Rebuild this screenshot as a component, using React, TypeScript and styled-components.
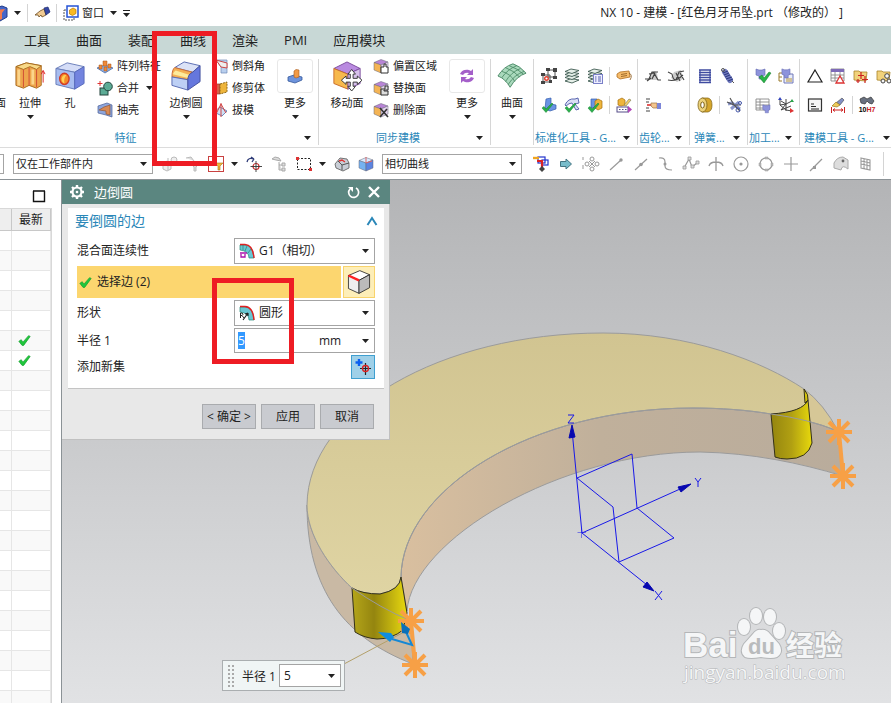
import React, { ReactNode, useEffect, useRef } from "react";
import styled, { createGlobalStyle, css } from "styled-components";

const GlobalStyle = createGlobalStyle`
  * { box-sizing: border-box; }
  body {
    margin: 0;
    background: #fff;
    color: #222;
    font-family: "Open Sans", "Noto Sans CJK SC", sans-serif;
    font-size: 12px;
  }
  button, input, select { font: inherit; color: inherit; margin: 0; }
`;

/* ---------- icons ---------- */

const ink = "#444";
const grey = "#999";
const gold = "#eeb53c";

const cube = (top: string, left: string, right: string) => (
  <>
    <path d="M1 4.500L8 1.500L15 4L8 7Z" fill={top} stroke="#667" strokeWidth=".5" />
    <path d="M1 4.500L8 7V15L1 12Z" fill={left} stroke="#667" strokeWidth=".5" />
    <path d="M8 7L15 4V12L8 15Z" fill={right} stroke="#667" strokeWidth=".5" />
  </>
);

const layers = (
  <g fill="#e6efe9" stroke="#3d5a50" strokeWidth=".9">
    <path d="M1 13L7 10.500L15 12L8 15Z" />
    <path d="M1 9.500L7 7L15 8.500L8 11.500Z" />
    <path d="M1 6.500L7 4L15 5.500L8 8.500Z" />
    <path d="M1 3.500L7 1L15 2.500L8 5.500Z" />
  </g>
);

const tick = <path d="M1 11L3 9.500L5 12L11 6L12 7L5 15.500Z" fill="#29b04a" stroke="#168032" strokeWidth=".5" />;
const purpleClamp = <path d="M1 1L4 2H7L10 1V7L8 8V11H4V8L1 7Z" fill="#8d93dc" stroke="#6268b0" strokeWidth=".6" />;

const glyphs: Record<string, ReactNode> = {
  part: (
    <>
      <path d="M0 4L10 1L15 3V12L8 16L0 14Z" fill="#4566c9" stroke="#233d8a" />
      <path d="M2 5L13 4L10 8V14L7 15V9Z" fill="#f07a4c" />
    </>
  ),
  hand: (
    <>
      <path d="M1 10L6 6L10 4L12 10L8 12L7 10L5 12L4 10Z" fill="#f1cb93" stroke="#6b4b22" strokeWidth=".8" />
      <path d="M10 3L14 2L16 7L12 10Z" fill="#3547a5" stroke="#1e2a6b" strokeWidth=".7" />
    </>
  ),
  windows: (
    <>
      <path d="M1 5H11V15H1Z" fill="none" stroke="#555" strokeDasharray="2 1" />
      <rect x="4" y="1" width="11" height="11" fill="#fff" stroke="#2453d6" strokeWidth="1.500" />
      <path d="M6.500 5L10 3L13 4.500V8.500L9.500 10.500L6.500 9Z" fill="#f9b923" stroke="#b97a00" strokeWidth=".7" />
    </>
  ),
  pattern: (
    <>
      <path d="M0 10L8 7L16 10L8 15Z" fill="#8fb2e6" stroke="#3b5fa0" strokeWidth=".7" />
      <path d="M2 7h3v4H2zM6 3h4v5H6zM11 6h3v4h-3zM7 9h3v4H7z" fill="#f08a3a" stroke="#a1521a" strokeWidth=".5" />
    </>
  ),
  unite: (
    <>
      <rect x="3" y="8" width="8" height="7" fill="#5cab95" stroke="#24453d" />
      <circle cx="11" cy="6.500" r="4.300" fill="#5cab95" stroke="#24453d" />
      <path d="M3 1V6M.5 3.500H5.500" stroke="#d33" />
    </>
  ),
  shell: (
    <>
      <path d="M1 4L10 1L15 3V15L9 13L1 11Z" fill="#8ea6dc" stroke="#4b5f95" strokeWidth=".7" />
      <path d="M7 5L13 3V13L9 12V9L2 8Z" fill="#d98a55" stroke="#8c4d25" strokeWidth=".6" />
    </>
  ),
  chamfer: (
    <>
      <path d="M4 2H15V15H9V9Z" fill="#b9cfee" stroke="#6d86b5" strokeWidth=".7" />
      <path d="M4 2L15 5V10L9 9Z" fill="#eee" stroke="#c44" />
    </>
  ),
  trim: (
    <>
      <path d="M1 4H8V14H1Z" fill="#d65f4a" stroke="#933" strokeWidth=".7" />
      <path d="M8 4L15 2V12L8 14Z" fill={gold} stroke="#8c6517" strokeDasharray="2 1" />
    </>
  ),
  draft: (
    <>
      <path d="M2 10L8 5L15 9L10 14Z" fill="#cfe0f5" stroke="#5870a8" strokeWidth=".8" />
      <path d="M9 1V15M9 2L4 12M9 2L14 11" stroke="#d04545" fill="none" />
    </>
  ),
  more: (
    <>
      <path d="M1 9L7 7L15 9V12L8 15L1 13Z" fill="#6d93dc" stroke="#35589b" strokeWidth=".8" />
      <path d="M7 3L9 1.500L12 2V9L9 10L7 9Z" fill="#f19a46" stroke="#a85a1d" strokeWidth=".6" />
    </>
  ),
  sync: (
    <g fill="#a45fc9">
      <path d="M1 6A7 6 0 0 1 12 3L14 1V7H8L10 5A5 4 0 0 0 4 7Z" />
      <path d="M15 10A7 6 0 0 1 4 13L2 15V9H8L6 11A5 4 0 0 0 12 9Z" />
    </g>
  ),
  offset: (
    <>
      {cube("#b884d6", "#f4b454", "#e4d4ee")}
      <path d="M8 9h3V6h2v3h2v6H8z" fill="#fff" stroke="#333" />
    </>
  ),
  replace: (
    <>
      {cube("#b884d6", "#f4b454", "#e4d4ee")}
      <path d="M8 9h4V6h3v4h-4v1h4v4H8z" fill="#ddd" stroke="#333" />
    </>
  ),
  remove: (
    <>
      {cube("#b884d6", "#f4b454", "#e4d4ee")}
      <path d="M7 6L15 15M14 7L7 15" stroke="#333" strokeWidth="1.600" />
    </>
  ),
  nodes: (
    <>
      <path d="M2 7H9V14H2Z M7 2H14V9H7Z" fill="none" stroke="#555" />
      <path d="M0 5h4v3H0zM0 13h4v3H0zM8 12h3v3H8zM5 0h4v3H5zM12 0h4v4h-4zM12 8h4v3h-4z" fill={ink} />
      <circle cx="5.500" cy="10.500" r="1.800" fill="#fff" stroke="#e1402f" strokeWidth="1.400" />
    </>
  ),
  layers,
  layerList: (
    <>
      {layers}
      <rect x="6.500" y="6.500" width="9" height="9" fill="#eef" stroke="#7a80c8" />
      <path d="M8 9h1.500M11 9h3M8 11h1.500M11 11h3M8 13h1.500M11 13h3" stroke="#5560b0" />
    </>
  ),
  tag: (
    <>
      <path d="M1 6L4 4L13 3L14 9L4 11L1 9Z" fill="#f5bb6a" stroke="#b16f20" strokeWidth=".8" />
      <path d="M5 6.500L11 5.500M5 8.500L11 7.500M13 5Q17 7 14 12" stroke="#8a5718" fill="none" strokeWidth=".8" />
    </>
  ),
  checkBlock: (
    <>
      <path d="M5 2L10 1V7L15 8V12L9 14L4 12Z" fill="#6a94e4" stroke="#345cae" strokeWidth=".7" />
      {tick}
    </>
  ),
  checkTool: (
    <>
      <path d="M1 8Q4 1 11 2L14 1L15 6L11 7L15 12L12 13L8 6Q5 6 2 9Z" fill="#d9ddf5" stroke="#4d59a8" strokeWidth=".9" />
      {tick}
    </>
  ),
  checkBoxes: (
    <>
      <path d="M4 2L10 2V11H4Z" fill="#6a94e4" stroke="#345cae" strokeWidth=".7" />
      <path d="M8 4L11 2L15 4V11L11 13L8 11Z" fill={gold} stroke="#a66d0d" strokeWidth=".7" />
      {tick}
    </>
  ),
  boxEdit: (
    <>
      <path d="M2 3L6 1L9 3V8L5 9L2 8Z" fill={gold} stroke="#a66d0d" strokeWidth=".7" />
      <path d="M8 8L13 2L15 3L10 9Z" fill="#f4d06a" stroke="#775" strokeWidth=".6" />
      <rect x="1" y="10" width="11" height="5" fill="#fff" stroke="#544c88" />
      <path d="M3 12.500h1.500M6 12.500h1.500M9 12.500h1.500" stroke="#544c88" />
      <path d="M12 9L16 12.500L12 16Z" fill="#b044b8" />
    </>
  ),
  gearTooth: (
    <>
      <path d="M4 12L8 4Q10 2 12 5L13 12Z" fill="#ccc" />
      <path d="M0 11H4L7 4H13M4 6L9 5L13 12H16M7 11L10 5M2 13L6 10" stroke={ink} strokeWidth="1.200" fill="none" />
    </>
  ),
  gearMesh: (
    <>
      <path d="M3 10L6 4L13 2L15 11L9 14Z" fill="#ccc" />
      <path d="M0 4L4 6Q5 12 8 12L11 4L16 3M0 12Q8 14 15 7M8 5L12 13M12 5L16 12" stroke={ink} strokeWidth="1.100" fill="none" />
    </>
  ),
  handList: (
    <>
      <path d="M1 2H5M1 5H4M1 11H4M1 14H5" stroke={ink} strokeWidth="1.200" />
      <path d="M2 8H6" stroke="#d22" strokeWidth="1.500" />
      <path d="M6 6L12 6V11H8L6 9Z" fill="#f3c58e" stroke="#9e7442" strokeWidth=".7" />
      <path d="M12 6H16V12H12Z" fill="#7d86d8" />
    </>
  ),
  spring: (
    <>
      <path d="M3 2V14M13 2V14" stroke="#6973b7" strokeWidth="1.500" />
      <path d="M2 2H14M2 4.500H14M2 7H14M2 9.500H14M2 12H14M2 14.500H14" stroke="#3f4ba0" strokeWidth="1.400" />
    </>
  ),
  spring2: (
    <>
      <path d="M5 4L10 12" stroke="#6f79bd" strokeWidth="6" strokeLinecap="round" />
      <path d="M3 5L8 3M4 7L9 5M5 9L10 7M6 11L12 9M8 13L13 11" stroke="#2d387f" />
      <circle cx="3" cy="2" r="1.500" fill="none" stroke="#555" />
      <path d="M12 13L14 15" stroke="#555" />
    </>
  ),
  roll: (
    <>
      <path d="M5 1H11Q15 2 15 8T11 15H5Z" fill="#d5a62c" stroke="#7e6216" strokeWidth=".7" />
      <ellipse cx="5.500" cy="8" rx="4.500" ry="7" fill="#ecd27b" stroke="#7e6216" strokeWidth=".8" />
      <ellipse cx="5.500" cy="8" rx="1.800" ry="3" fill="#fff" stroke="#7e6216" />
    </>
  ),
  cut: (
    <>
      <path d="M2 7L6 6L14 12M5 12L13 5" stroke="#8b97cc" strokeWidth="3" fill="none" />
      <path d="M4 1L8 8L14 14M1 5L8 8L15 8" stroke="#555" strokeWidth="1.200" fill="none" />
      <circle cx="12" cy="13" r="2" fill="none" stroke="#4456a8" />
      <circle cx="14" cy="6" r="1.500" fill="none" stroke="#4456a8" />
    </>
  ),
  clampCheck: (
    <>
      {purpleClamp}
      <path d="M4 9L7 7L9 10L14 4L16 5L9 15Z" fill="#28b448" stroke="#17752d" strokeWidth=".5" />
    </>
  ),
  clampList: (
    <>
      <path d="M1 5V13H4M1 5H4M1 9H4" fill="none" stroke="#9a7a2a" />
      <path d="M6 6H15V15H6Z" fill="#e8ecfa" stroke="#7179b8" />
      <path d="M8 11h6M8 13h6" stroke="#b99738" />
      <g transform="translate(3 0) scale(.9)">{purpleClamp}</g>
    </>
  ),
  clampGrid: (
    <>
      <path d="M1 2H14V13H1ZM1 5H14M1 8H14M1 11H14M5 2V13" fill="#fff" stroke="#888" strokeWidth=".9" />
      <g transform="translate(7 7) scale(.8)">{purpleClamp}</g>
    </>
  ),
  axes: (
    <>
      <path d="M2 2V8L8 13L14 14M2 8L8 7L14 4M8 2V14M3 4L8 7L3 13L13 9" stroke="#444" fill="none" />
      <path d="M14 2L16 5L12 5Z" fill="#2aa34a" />
      <path d="M12 11L16 14L12 16Z" fill="#d33" />
      <path d="M2 0L4 3H0Z" fill="#34b" />
    </>
  ),
  triangle: <path d="M8 2L15 14H1Z" fill="none" stroke="#222" strokeWidth="1.200" />,
  tableWarn: (
    <>
      <path d="M1 1H14V13H1ZM1 7H14M1 10H14M5 4V13M10 4V13" fill="#fff" stroke="#888" strokeWidth=".9" />
      <path d="M1 1H14V4H1Z" fill="#7e6ab8" />
      <path d="M10 8L14 15H6Z" fill="#fff" stroke="#d33" strokeWidth="1.300" />
    </>
  ),
  folderAdd: (
    <>
      <path d="M1 3H6L7 4H14L13 13L1 12Z" fill="#f1d27c" stroke="#a98429" strokeWidth=".8" />
      <path d="M8 4V11M5 7.500H11M12 8V15M9 11.500H15M5 11V15M3 13H7" stroke="#c22" strokeWidth="1.200" />
    </>
  ),
  folderGears: (
    <>
      <path d="M1 3H6L7 4H14L13 13L1 12Z" fill="#f1d27c" stroke="#a98429" strokeWidth=".8" />
      <g fill="#f5f5f5" stroke="#444">
        <circle cx="11" cy="8" r="2.300" />
        <circle cx="7" cy="13" r="2" />
        <circle cx="13" cy="13" r="2" />
      </g>
    </>
  ),
  note: (
    <>
      <rect x="1.500" y="2" width="13" height="12" fill="#f4f4f4" stroke="#333" strokeWidth="1.200" />
      <path d="M4 7H7M4 9.500H9M4 12H12" stroke="#222" strokeWidth="1.200" />
    </>
  ),
  brush: (
    <>
      <path d="M12 1L14 3L10 8L6 6Z" fill="#8290c5" stroke="#444" strokeWidth=".6" />
      <path d="M6 5L10 8L7 10L2 9Z" fill="#eecb5b" stroke="#8c6c14" strokeWidth=".6" />
      <path d="M1.500 10V16M14.500 10V16M3 13H13M3 13L5 11.500M3 13L5 14.500M13 13L11 11.500M13 13L11 14.500" stroke="#c22" fill="none" />
    </>
  ),
  binoculars: (
    <>
      <path d="M1 2L5 0L8 2L12 0L15 4L13 7L10 6L8 4L6 7L2 6Z" fill="#697180" stroke="#333" strokeWidth=".7" />
      <text x="8" y="15" fontSize="7" fontWeight="700" fontFamily="Liberation Sans" textAnchor="middle">
        10<tspan fill="#c22">H7</tspan>
      </text>
    </>
  ),
  ghostBox: (
    <g stroke="#bbb" fill="#eee">
      <path d="M1 8L5 5L9 8V13L5 15L1 13ZM6 2V14" />
      <circle cx="12" cy="4" r="3" />
    </g>
  ),
  ghostFunnel: <path d="M1 2L6 1L9 5M5 7H15L11 11V15H9V11Z" stroke="#bbb" fill="#ddd" />,
  funnel: (
    <>
      <rect x=".5" y=".5" width="15" height="15" fill="#fff" stroke="#c94141" />
      <path d="M7 7H15L12 10V14H10V10Z" fill="#f0b63c" stroke="#a8791a" strokeWidth=".6" />
    </>
  ),
  snap: (
    <>
      <path d="M1 6Q2 1 8 3M8 3L5 1M8 3L6 6" stroke="#2e3b78" strokeWidth="1.300" fill="none" />
      <circle cx="10" cy="10.500" r="3" fill="#fff" stroke="#c33" strokeWidth="1.200" />
      <path d="M10 5V16M4.500 10.500H16" stroke="#333" strokeWidth=".9" />
    </>
  ),
  ghostTree: (
    <g stroke="#aaa" fill="#ddd">
      <path d="M1 3L4 1L8 2L10 5L5 4Z" />
      <path d="M8 6V14H11M8 9H11M11 7h3v3h-3zM11 12h3v3h-3z" />
    </g>
  ),
  marquee: (
    <>
      <rect x="1.500" y="2.500" width="13" height="11" fill="none" stroke="#222" strokeDasharray="2 1.500" />
      <path d="M0 1h3v3H0zM13 12h3v3h-3z" fill="#d33" />
    </>
  ),
  solidGrey: (
    <>
      <path d="M1 8L6 2L13 3L15 7V12L9 15L2 12Z" fill="#c9ced6" stroke="#555" strokeWidth=".8" />
      <path d="M4 5L8 9V14M8 9L15 7" stroke="#555" fill="none" />
      <path d="M5 5L8 4L11 6" stroke="#d33" strokeWidth="1.400" fill="none" />
    </>
  ),
  solidBlue: (
    <>
      {cube("#d7eaff", "#75b2f1", "#5c84e0")}
      <path d="M8 1V7L14 5" stroke="#d66" fill="none" />
    </>
  ),
  route: (
    <>
      <rect x="5" y="1" width="7" height="6" fill="#fff" stroke="#23c" strokeWidth="1.200" />
      <rect x="9" y="4" width="6" height="5" fill="none" stroke="#23c" strokeWidth="1.200" />
      <path d="M0 2H6" stroke="#f0a51f" strokeWidth="2.400" />
      <path d="M4 5H9V12" stroke="#d22" strokeWidth="2.200" fill="none" />
      <path d="M9 10L12 13L9 16L6 13Z" fill="#444" />
    </>
  ),
  arrow: <path d="M2.500 5.500H8V3L13.500 8L8 13V10.500H2.500Z" fill="#78bccb" stroke="#447482" />,
  points: (
    <g fill="none" stroke={grey}>
      <circle cx="9" cy="3" r="2" /><circle cx="9" cy="13" r="2" /><circle cx="4" cy="8" r="2" /><circle cx="14" cy="8" r="2" />
      <path d="M0 1V4M0 9V13M6 5L12 11M12 5L6 11" />
    </g>
  ),
  endPoint: (
    <>
      <path d="M2 14L13 4" stroke={grey} strokeWidth="1.200" />
      <circle cx="13" cy="4" r="1.700" fill={grey} />
    </>
  ),
  midPoint: (
    <>
      <path d="M2 14L14 3" stroke={grey} strokeWidth="1.200" />
      <circle cx="8" cy="8.500" r="1.800" fill={grey} />
    </>
  ),
  control: (
    <>
      <path d="M1 2Q7 1 7 6V10Q7 14 14 14" fill="none" stroke={grey} strokeWidth="1.200" />
      <circle cx="7" cy="8" r="1.500" fill={grey} />
    </>
  ),
  polePoint: (
    <>
      <path d="M1 12L6 3L9 11L14 7" fill="none" stroke={grey} strokeWidth="1.200" />
      <path d="M0 10h3v3H0zM5 1h3v3H5zM8 9h3v3H8zM13 5h3v3h-3z" fill="#ddd" stroke={grey} strokeWidth=".8" />
    </>
  ),
  intersect: <path d="M8 1V15M1 10Q2 6 8 6T15 10" fill="none" stroke={grey} strokeWidth="1.300" />,
  centre: (
    <>
      <circle cx="8" cy="8" r="7" fill="none" stroke={grey} strokeWidth="1.200" />
      <circle cx="8" cy="8" r="1.600" fill={grey} />
    </>
  ),
  quadrant: (
    <>
      <circle cx="8" cy="8" r="6" fill="none" stroke={grey} strokeWidth="1.200" />
      <path d="M7 1h3v2H7zM7 13h3v2H7zM1 7h2v3H1zM13 7h2v3h-2z" fill="#bbb" stroke={grey} strokeWidth=".5" />
    </>
  ),
  cross: <path d="M8 1V15M1 8H15" stroke={grey} strokeWidth="1.200" />,
  onCurve: (
    <>
      <path d="M2 15L14 3" stroke={grey} strokeWidth="1.200" />
      <path d="M5 10h3v3H5z" fill={grey} />
    </>
  ),
  onFace: (
    <>
      <path d="M1 7Q4 1 10 1L15 4V13Q9 8 8 14L1 12Z" fill="#ddd" stroke="#aaa" />
      <circle cx="10" cy="5" r="1.400" fill="#666" />
    </>
  ),
  gridFace: <path d="M3 2L12 4V14L3 12ZM6 3V13M9 3V13M3 5L12 7M3 8L12 10" fill="none" stroke={grey} strokeWidth="1.100" />,
  check: <path d="M1 9L4 7L6 10L13 2L15 3L7 14H5Z" fill="#1fc83c" stroke="#119a2a" strokeWidth=".8" />,
  tangent: (
    <>
      <path d="M1 2H6Q14 2 15 15H10Q10 8 1 7Z" fill="#68c6d2" stroke="#287" strokeWidth=".7" />
      <path d="M1 1.500H6Q14 2 15 15" fill="none" stroke="#d22" strokeWidth="1.400" />
      <path d="M4 2V7M8 3L6 8M12 6L9 10" stroke="#276" strokeWidth=".6" />
      <path d="M1 10H8M2 11V14H6V11" fill="none" stroke="#a1a" strokeWidth="1.300" />
    </>
  ),
  circular: (
    <>
      <path d="M1 2H6Q14 2 15 15H10Q10 8 1 7Z" fill="#68c6d2" stroke="#287" strokeWidth=".7" />
      <path d="M1 1.500H6Q14 2 15 15" fill="none" stroke="#d22" strokeWidth="1.400" />
      <path d="M4 15L9 8M9 8L6 9M9 8V11" fill="none" stroke="#222" strokeWidth="1.200" />
      <path d="M1.500 13V8H3Q5 9.300 3 10.500H1.500M3 10.500L5 13" fill="none" stroke="#222" />
    </>
  ),
  addSet: (
    <>
      <path d="M4 0V7M.5 3.500H7.500" stroke="#0a5ff0" strokeWidth="2.400" />
      <path d="M10.500 4V16M5 9.500H16" stroke="#222" strokeWidth="1.200" />
      <circle cx="10.500" cy="9.500" r="3" fill="none" stroke="#d22" strokeWidth="1.400" />
    </>
  ),
  gear: (
    <>
      <circle cx="8" cy="8" r="4.500" fill="none" stroke="#fff" strokeWidth="2.200" />
      <path d="M8 1V3M8 13V15M1 8H3M13 8H15M3 3L4.500 4.500M11.500 11.500L13 13M13 3L11.500 4.500M3 13L4.500 11.500" stroke="#fff" strokeWidth="2.400" />
      <circle cx="8" cy="8" r="1.300" fill="#fff" />
    </>
  ),
  reset: (
    <>
      <path d="M4 5A5 5 0 1 0 10 4" fill="none" stroke="#fff" strokeWidth="1.700" />
      <path d="M2 3H7V8Z" fill="#fff" />
    </>
  ),
  close: <path d="M3 3L13 13M13 3L3 13" stroke="#fff" strokeWidth="2.400" />,
  chevron: <path d="M3.500 12L8 5L12.500 12" fill="none" stroke="#2a87b8" strokeWidth="2" />,
  maximize: <path d="M2 3H14M2.500 3V13.500H13.500V3" fill="none" stroke="#111" strokeWidth="1.400" />,
  /* 32-unit drawings */
  extrude: (
    <>
      <path d="M1 6L12 2L28 5V26L23 29L15 26L9 29L1 26Z" fill="#eea54c" stroke="#a66c20" />
      <path d="M1 6L9 9L16 6L23 9L28 5L12 2Z" fill="#f8d988" stroke="#a66c20" />
      <path d="M4 9V26M19 9V25" stroke="#fbd58b" strokeWidth="3" />
      <path d="M9 9V28M15 7V26M23 9V28" stroke="#d04b33" />
      <path d="M30 23V11M28 14L30 10L32 14" stroke="#d22" fill="none" />
    </>
  ),
  hole: (
    <>
      <path d="M1 8L13 2L31 6L21 12Z" fill="#d5ddf7" stroke="#667bb8" />
      <path d="M1 8L21 12V30L1 25Z" fill="#a8bdf0" stroke="#667bb8" />
      <path d="M21 12L31 6V24L21 30Z" fill="#7384df" stroke="#566abb" />
      <ellipse cx="10" cy="19" rx="5" ry="6" fill="#f58b29" stroke="#d13c27" strokeWidth="1.500" />
      <path d="M7 19Q8 14 12 15Q9 19 10 24Q7 23 7 19Z" fill="#ffd057" />
    </>
  ),
  blend: (
    <>
      <path d="M4 7L14 1L31 5L23 12Z" fill="#dbe2f6" stroke="#5468b0" />
      <path d="M1 17Q1 9 4 7L23 12Q18 14 18 20Z" fill="#f4b054" stroke="#c96b37" />
      <path d="M2 14Q3 11 5 10L20 15L18 18Z" fill="#fdeb9c" />
      <path d="M1 17L18 20V31L1 26Z" fill="#bdd0f5" stroke="#5468b0" />
      <path d="M18 20Q18 14 23 12L31 5V22L18 31Z" fill="#6577dd" stroke="#43509d" />
    </>
  ),
  moveFace: (
    <>
      <path d="M2 8L16 1L30 8L17 14Z" fill="#b98ae0" stroke="#7a4a9c" />
      <path d="M2 8L17 14V30L2 24Z" fill="#f7b94d" stroke="#c96b27" />
      <path d="M17 14L30 8V24L17 30Z" fill="#d6c1ea" stroke="#7a4a9c" />
      <path d="M21 9L25 14H22.500V18.500H27V16L32 20.500L27 25V22.500H22.500V27H25L21 32L17 27H19.500V22.500H15V25L10 20.500L15 16V18.500H19.500V14H17Z" fill="#fff" stroke="#333" />
    </>
  ),
  surface: (
    <>
      <path d="M1 16Q7 6 17 3Q24 5 31 13Q21 16 14 28Q9 19 1 16Z" fill="#a9d9bc" stroke="#4b8966" />
      <path d="M5 11Q15 14 19 22M9 7Q19 11 24 17M13 5Q22 8 28 14M5 18Q11 9 21 5M9 22Q15 12 25 8M12 25Q18 15 29 11" fill="none" stroke="#4b8966" strokeWidth=".9" />
    </>
  ),
  edgeCube: (
    <>
      <path d="M3 8L17 2L29 7L16 14Z" fill="#fff" stroke="#222" />
      <path d="M3 8L16 14V30L3 24Z" fill="#eee" stroke="#222" />
      <path d="M16 14L29 7V23L16 30Z" fill="#bbb" stroke="#222" />
      <path d="M3 8L16 14" stroke="#f22" strokeWidth="3" />
    </>
  ),
};

const largeIcons = ["extrude", "hole", "blend", "moveFace", "surface", "edgeCube"];

const Glyph = styled.svg`
  flex: none;
  display: block;
  overflow: visible;
`;

function Icon({ name, size = 16 }: { name: string; size?: number }) {
  const unit = largeIcons.includes(name) ? 32 : 16;
  return (
    <Glyph width={size} height={size} viewBox={`0 0 ${unit} ${unit}`} aria-hidden="true">
      {glyphs[name]}
    </Glyph>
  );
}

/* ---------- shared parts ---------- */

const CaretShape = styled.svg`
  flex: none;
  display: block;
`;

function Caret({ bar, className }: { bar?: boolean; className?: string }) {
  return (
    <CaretShape className={className} width="7" height={bar ? 7 : 4} viewBox={bar ? "0 -3 7 7" : "0 0 7 4"} aria-hidden="true">
      {bar && <path d="M0 -2.500H7" stroke="#222" />}
      <path d="M0 0H7L3.500 4Z" fill="#222" />
    </CaretShape>
  );
}

const flatButton = css`
  border: 0;
  padding: 0;
  background: transparent;
  color: #222;
`;

const IconButton = styled.button<{ $size?: number }>`
  ${flatButton};
  flex: none;
  display: grid;
  place-items: center;
  width: ${(p) => p.$size ?? 16}px;
  height: ${(p) => p.$size ?? 16}px;
`;

const Page = styled.div`
  position: relative;
  display: flex;
  flex-direction: column;
  min-height: 100vh;
  overflow: hidden;
`;

/* ---------- title bar and tabs ---------- */

const TitleBar = styled.header`
  display: flex;
  align-items: center;
  height: 26px;
  padding-right: 48px;
`;

const QuickAccess = styled.div`
  display: flex;
  align-items: center;
  gap: 6px;
  margin-left: -8px;
`;

const MenuButton = styled.button`
  ${flatButton};
  display: flex;
  align-items: center;
  gap: 3px;
  font-size: 11px;
  line-height: 16px;
`;

const Divider = styled.span<{ $height: number }>`
  flex: none;
  width: 1px;
  height: ${(p) => p.$height}px;
  background: #d4d4d4;
`;

const Title = styled.h1`
  margin: 0 0 0 auto;
  font-size: 12px;
  font-weight: 400;
  line-height: 18px;
  white-space: pre;
`;

const Tabs = styled.nav`
  display: flex;
  align-items: center;
  gap: 26px;
  height: 28px;
  padding-left: 24px;
  background: #c8d8d6;
`;

const Tab = styled.button`
  ${flatButton};
  font-size: 13px;
  line-height: 20px;
  white-space: nowrap;
`;

/* ---------- ribbon ---------- */

const Ribbon = styled.section`
  display: flex;
  height: 94px;
  padding: 5px 0 2px;
  border-bottom: 1px solid #dcdcdc;
`;

const Group = styled.div<{ $width?: number }>`
  flex: ${(p) => (p.$width ? `0 0 ${p.$width}px` : "1 0 0")};
  display: flex;
  flex-direction: column;
  justify-content: space-between;
  min-width: 0;
  overflow: hidden;
  border-right: ${(p) => (p.$width ? "1px solid #d6d6d6" : "0")};
`;

const GroupBody = styled.div<{ $start?: number }>`
  display: flex;
  padding-left: ${(p) => p.$start ?? 0}px;
`;

const GroupFooter = styled.div<{ $start?: number; $end?: number; $edge?: number; $centred?: boolean }>`
  display: flex;
  align-items: center;
  height: 14px;
  padding: 0 ${(p) => p.$edge ?? 7}px 0 ${(p) => p.$start ?? 1}px;
  color: #2a87b8;
  font-size: 11px;
  line-height: 14px;
  white-space: nowrap;

  & > :first-child {
    flex: 1;
    padding-right: ${(p) => p.$end ?? 0}px;
    text-align: ${(p) => (p.$centred ? "center" : "left")};
  }
`;

const BigButton = styled.button<{ $width: number }>`
  ${flatButton};
  flex: none;
  display: flex;
  flex-direction: column;
  align-items: center;
  width: ${(p) => p.$width}px;
  height: 62px;
  font-size: 11px;
  line-height: 16px;
  white-space: nowrap;
`;

const BigPicture = styled.span<{ $framed?: boolean }>`
  display: grid;
  place-items: center;
  width: 36px;
  height: 34px;
  margin-bottom: 2px;
  border: ${(p) => (p.$framed ? "1px solid #e8e8e8" : "0")};
  border-radius: 3px;
`;

const BigCaret = styled(Caret)`
  margin-top: 4px;
`;

const CutLabel = styled.span`
  display: flex;
  justify-content: flex-end;
  flex: none;
  width: 6px;
  margin: 36px 2px 0 0;
  overflow: hidden;
  font-size: 11px;
  line-height: 16px;
`;

const CommandList = styled.div<{ $width: number; $before: number }>`
  flex: none;
  width: ${(p) => p.$width}px;
  margin: -4px 0 0 ${(p) => p.$before}px;
`;

const Command = styled.button`
  ${flatButton};
  display: flex;
  align-items: center;
  gap: 4px;
  height: 22px;
  font-size: 11px;
  line-height: 16px;
  white-space: nowrap;
`;

const CommandCaret = styled(Caret)`
  margin-left: 3px;
`;

const IconRows = styled.div`
  display: grid;
  gap: 13px;
  padding: 9px 0 0 7px;
`;

const IconRow = styled.div`
  display: flex;
  align-items: center;
  gap: 7px;
  height: 16px;
`;

const RowDivider = styled(Divider)`
  margin: 0 -1px;
`;

function Big({ icon, label, width, caret, framed }: { icon: string; label: string; width: number; caret?: boolean; framed?: boolean }) {
  return (
    <BigButton $width={width}>
      <BigPicture $framed={framed}>
        <Icon name={icon} size={framed ? 16 : 30} />
      </BigPicture>
      {label}
      {caret && <BigCaret />}
    </BigButton>
  );
}

function Commands({ items, width, before }: { items: [string, string, boolean?][]; width: number; before: number }) {
  return (
    <CommandList $width={width} $before={before}>
      {items.map(([icon, label, caret]) => (
        <Command key={label}>
          <Icon name={icon} />
          {label}
          {caret && <CommandCaret />}
        </Command>
      ))}
    </CommandList>
  );
}

const toolGroups: { label: string; width?: number; start?: number; edge?: number; rows: string[][] }[] = [
  { label: "标准化工具 - G...", width: 104, rows: [["nodes", "layers", "layerList", "|", "tag"], ["checkBlock", "checkTool", "checkBoxes", "|", "boxEdit"]] },
  { label: "齿轮...", width: 52, rows: [["gearTooth", "gearMesh"], ["handList"]] },
  { label: "弹簧...", width: 58, start: 4, rows: [["spring", "spring2"], ["roll", "|", "cut"]] },
  { label: "加工...", width: 52, rows: [["clampCheck", "clampList"], ["clampGrid", "axes"]] },
  { label: "建模工具 - G...", start: 4, edge: 1, rows: [["triangle", "tableWarn", "folderAdd", "folderGears"], ["note", "brush", "|", "binoculars"]] },
];

/* ---------- selection bar ---------- */

const SelectionBar = styled.section`
  display: flex;
  align-items: center;
  height: 32px;
  border-bottom: 1px solid #8b9296;
`;

const SelectBox = styled.div<{ $width?: number; $height: number }>`
  display: flex;
  align-items: center;
  gap: 4px;
  flex: none;
  width: ${(p) => (p.$width ? `${p.$width}px` : "auto")};
  height: ${(p) => p.$height}px;
  padding: 0 5px 0 2px;
  border: 1px solid #a4a4a4;
  background: #fff;
`;

const Select = styled.select`
  flex: 1;
  min-width: 0;
  height: 100%;
  border: 0;
  padding: 0;
  appearance: none;
  background: transparent;
  outline: 0;
`;

const SmallSelect = styled(Select)`
  font-size: 11px;
`;

const BoxEnd = styled.span`
  flex: none;
  width: 4px;
  height: 20px;
  margin-right: 9px;
  border: 1px solid #a4a4a4;
  border-left: 0;
`;

const BarTools = styled.div<{ $gap: number; $before: number }>`
  display: flex;
  align-items: center;
  gap: ${(p) => p.$gap}px;
  padding-left: ${(p) => p.$before}px;
`;

/* ---------- part navigator ---------- */

const Main = styled.main`
  flex: 1;
  display: flex;
  min-height: 0;
`;

const Navigator = styled.aside`
  flex: none;
  width: 62px;
  height: calc(100vh - 180px);
  min-height: 100%;
  overflow: hidden;
  border-right: 1px solid #8b9296;
`;

const NavigatorBar = styled.div`
  display: flex;
  justify-content: flex-end;
  align-items: center;
  height: 28px;
  padding: 3px 14px 0 0;
`;

const HistoryTable = styled.table`
  width: 52px;
  table-layout: fixed;
  border-collapse: separate;
  border-spacing: 0;
  border-top: 1px solid #d8d8d8;
  border-right: 1px solid #d8d8d8;

  th, td {
    height: 20px;
    padding: 0;
    border-bottom: 1px solid #e6e6e6;
    border-right: 1px solid #e6e6e6;
  }
  th {
    height: 22px;
    background: #eee;
    border-color: #c8c8c8;
    font-size: 12px;
    font-weight: 400;
    line-height: 18px;
    white-space: nowrap;
  }
  tr > :first-child { width: 12px; }
  tbody tr:nth-child(even) { background: #f9f9f9; }
  td svg { margin-left: 6px; width: 13px; height: 13px; }
`;

/* ---------- dialog ---------- */

const Viewport = styled.section`
  position: relative;
  flex: 1;
  min-width: 0;
  background: linear-gradient(#b3b4b6, #e1e2e4);
`;

const Scene = styled.svg`
  position: absolute;
  inset: 0;
  width: 100%;
  height: 100%;
`;

const Dialog = styled.form`
  position: relative;
  width: 328px;
  background: #e8e8e8;
  border: solid #c0c0c0;
  border-width: 0 1px 1px 0;
`;

const DialogHeader = styled.div`
  display: flex;
  align-items: center;
  gap: 4px;
  height: 24px;
  margin-right: -1px;
  padding: 0 8px 0 7px;
  background: #5b8680;
  color: #fff;
`;

const DialogTitle = styled.h2`
  flex: 1;
  margin: 0 0 0 5px;
  font-size: 13px;
  font-weight: 400;
  line-height: 20px;
`;

const Panel = styled.div`
  display: grid;
  gap: 2px;
  margin: 4px 5px 0 6px;
  padding: 0 9px 9px;
  background: #fff;
  border-bottom: 1px solid #c4c4c4;
`;

const PanelTitle = styled.h3`
  display: flex;
  align-items: center;
  justify-content: space-between;
  height: 28px;
  margin: 0 -5px 0 -2px;
  padding-bottom: 2px;
  color: #2a87b8;
  font-size: 14px;
  font-weight: 400;
  line-height: 20px;
`;

const Field = styled.div<{ $height: number }>`
  display: flex;
  align-items: center;
  justify-content: space-between;
  height: ${(p) => p.$height}px;
  line-height: 18px;
`;

const ActiveLabel = styled.div`
  flex: 1;
  display: flex;
  align-items: center;
  gap: 5px;
  height: 32px;
  margin-right: 2px;
  padding-left: 2px;
  background: #fcd66f;

  svg { width: 13px; height: 13px; }
`;

const EdgeButton = styled(IconButton)`
  background: #fdeeb8;
  border: 1px solid #f8d36c;
`;

const AddButton = styled(IconButton)`
  background: #9fd0e8;
  border: 1px solid #3f9fd0;
`;

const RadiusInput = styled.input`
  width: 79px;
  height: 20px;
  padding: 0 0 0 2px;
  border: 0;
  outline: 0;
  background: transparent;
  &::selection { background: #3399ff; color: #fff; }
`;

const Combo = styled(SelectBox)`
  padding-left: 4px;
`;

const RadiusBox = styled(SelectBox)`
  padding-left: 1px;
`;

const Actions = styled.div`
  display: flex;
  justify-content: flex-end;
  gap: 5px;
  padding: 15px 15px 10px;
`;

const ActionButton = styled.button`
  width: 54px;
  height: 25px;
  padding: 0;
  border: 1px solid #a9abae;
  background: #c9cbd0;
  line-height: 18px;
  white-space: nowrap;
`;

const FloatingField = styled.div`
  position: absolute;
  left: 160px;
  top: 480px;
  display: flex;
  align-items: center;
  gap: 3px;
  width: 123px;
  height: 31px;
  padding: 0 3px 0 4px;
  border: 1px solid #aaaeb0;
  background: #f0f5f5;
  white-space: nowrap;
`;

const Grip = styled.span`
  width: 8px;
  height: 24px;
  margin-right: 4px;
  background: radial-gradient(circle, #aaa 1px, transparent 1px) 0 0 / 4px 4px;
`;

const SizeBox = styled(SelectBox)`
  flex: 1;
  min-width: 0;
`;

const SizeInput = styled.input`
  width: 30px;
  flex: 1;
  height: 20px;
  padding: 0 0 0 2px;
  border: 0;
  outline: 0;
  background: transparent;
`;

const Marker = styled.div<{ $left: number; $top: number; $width: number; $height: number }>`
  position: absolute;
  left: ${(p) => p.$left}px;
  top: ${(p) => p.$top}px;
  width: ${(p) => p.$width}px;
  height: ${(p) => p.$height}px;
  border: 5px solid #ee1c24;
  pointer-events: none;
`;

/* ---------- model view ---------- */

function Star({ x, y }: { x: number; y: number }) {
  return (
    <path
      transform={`translate(${x} ${y})`}
      d="M-13 0H13M0 -13V13M-10 -10L10 10M10 -10L-10 10"
      stroke="#f7a046"
      strokeWidth="4"
    />
  );
}

const outerTop = "M352 588C330 568 307 535 307 505C308 410 440 333 603 333C690 333 762 361 804 389";
const innerTop = "401 577C402 490 530 408 693 408C720 408 748 410 771 414";

function Model() {
  return (
    <Scene viewBox="62 180 829 523" preserveAspectRatio="xMinYMin slice" role="img" aria-label="月牙吊坠">
      <defs>
        <linearGradient id="wall" x1="0" x2="1">
          <stop offset="0" stopColor="#d9bf9f" />
          <stop offset=".45" stopColor="#c0b09b" />
          <stop offset="1" stopColor="#b9ac9c" />
        </linearGradient>
        <linearGradient id="top" x1="0" y1="0" x2="0" y2="1">
          <stop offset="0" stopColor="#d1c491" />
          <stop offset="1" stopColor="#dfd4a3" />
        </linearGradient>
        <linearGradient id="fillet" x1="0" x2="1">
          <stop offset="0" stopColor="#b5a61a" />
          <stop offset=".4" stopColor="#94850f" />
          <stop offset="1" stopColor="#e8d90f" />
        </linearGradient>
        <linearGradient id="filletRight" x1="0" x2="1">
          <stop offset="0" stopColor="#94850f" />
          <stop offset=".5" stopColor="#b1a012" />
          <stop offset="1" stopColor="#e8d90c" />
        </linearGradient>
      </defs>
      <g strokeWidth="1" stroke="#9b9b9b">
        <path d="M307 505C307 590 345 638 413 664L411 621L352 588C330 568 307 535 307 505Z" fill="#c9b9a4" />
        <path d="M407 611C412 540 560 452 700 452C752 453 800 463 843 476L838 431C800 416 745 408 693 408C530 408 402 490 401 577Z" fill="url(#wall)" />
        <path d="M804 389Q824 404 838 431Q805 418 771 414Q805 410 808 400Z" fill="#d6c797" />
        <path d={`${outerTop}Q809 396 807 402Q800 413 771 414C748 410 720 408 693 408C530 408 402 490 401 577Q400 590 380 594Q362 594 352 588Z`} fill="url(#top)" />
      </g>
      <g stroke="#33301a" strokeWidth="1">
        <path d="M352 588Q362 594 380 594Q400 590 401 577L407 613L403 630Q392 639 377 639Q364 638 355 632Z" fill="url(#fillet)" />
        <path d="M771 414Q803 412 808 400L812 443Q808 459 787 459Q780 459 775 457Z" fill="url(#filletRight)" />
        <path d="M804 389Q809 395 808 400L805 403Z" fill="#d5c50b" />
      </g>
      <path d="M352 588Q380 608 411 621M771 414Q808 419 838 431" fill="none" stroke="#9b9b9b" />
      <path d={`M${innerTop}`} fill="none" stroke="#9b9b9b" />
      <path d="M344 664L406 631" stroke="#b3a06a" />
      <path d="M839 432L843 476M411 621L415 665" stroke="#f7a046" strokeWidth="4" />
      <Star x={839} y={432} />
      <Star x={843} y={476} />
      <Star x={411} y={621} />
      <Star x={415} y={665} />
      <path d="M392 639L412 645L406 632" fill="none" stroke="#1688d4" strokeWidth="2" />
      <path d="M378 632L391 633L394 637L390 642Z" fill="#108de0" />
      <path d="M401 622L410 629L408 634L402 633Z" fill="#0b70b8" />
      <g stroke="#1818e8" strokeWidth="1" fill="none">
        <path d="M582 533L572 430M582 533L689 485M582 533L652 589M577 478L632 454L637 508L674 538L619 562L613 507L577 478" />
        <path d="M577.500 532.500H586M581.500 528V538" strokeWidth=".5" />
        <path d="M572 425L575 437L569 438ZM691 484L681 492L678 487ZM654 591L643 587L647 582Z" fill="#0707b0" stroke="#0707b0" />
        <path d="M568 415H574L568 423H574M695 478L698 482L701 478M698 482V487M655 591L662 600M662 591L655 600" />
      </g>
      <g fill="#f5f6f7" stroke="#b4b6b8" strokeWidth="2" paintOrder="stroke">
        <text x="683" y="657" fontFamily="Liberation Sans" fontSize="35" fontWeight="700">Bai</text>
        <ellipse cx="744" cy="627" rx="6" ry="8" />
        <ellipse cx="756" cy="616" rx="6" ry="8" />
        <ellipse cx="770" cy="617" rx="6" ry="8" />
        <ellipse cx="779" cy="631" rx="6" ry="8" />
        <path d="M761 630Q766 629 770 634L779 644Q784 652 777 657Q772 659 761 657Q750 659 745 657Q739 652 744 644L753 634Q757 629 761 630Z" />
        <text x="786" y="656" fontFamily="Noto Sans CJK SC" fontSize="28" fontWeight="700">经验</text>
        <text x="684" y="679" fontFamily="Open Sans" fontSize="19" strokeWidth="1">jingyan.baidu.com</text>
        <text x="748" y="654" fontFamily="Liberation Sans" fontSize="22" fontWeight="700" fill="#b9bbbd" stroke="none">du</text>
      </g>
    </Scene>
  );
}

/* ---------- page ---------- */

export default function App() {
  const radius = useRef<HTMLInputElement>(null);
  useEffect(() => {
    radius.current?.focus();
    radius.current?.select();
  }, []);

  return (
    <Page>
      <GlobalStyle />
      <TitleBar>
        <QuickAccess>
          <IconButton aria-label="部件"><Icon name="part" /></IconButton>
          <Caret />
          <Divider $height={18} />
          <IconButton aria-label="触控"><Icon name="hand" /></IconButton>
          <Divider $height={18} />
          <MenuButton><Icon name="windows" />窗口</MenuButton>
          <Caret />
          <Caret bar />
        </QuickAccess>
        <Title>{"NX 10 - 建模 - [红色月牙吊坠.prt （修改的） ]"}</Title>
      </TitleBar>

      <Tabs>
        {["工具", "曲面", "装配", "曲线", "渲染", "PMI", "应用模块"].map((t) => <Tab key={t}>{t}</Tab>)}
      </Tabs>

      <Ribbon>
        <Group $width={319}>
          <GroupBody>
            <CutLabel>面</CutLabel>
            <Big icon="extrude" label="拉伸" width={44} caret />
            <Big icon="hole" label="孔" width={36} />
            <Commands before={9} width={67} items={[["pattern", "阵列特征"], ["unite", "合并", true], ["shell", "抽壳"]]} />
            <Big icon="blend" label="边倒圆" width={44} caret />
            <Commands before={4} width={65} items={[["chamfer", "倒斜角"], ["trim", "修剪体"], ["draft", "拔模"]]} />
            <Big icon="more" label="更多" width={36} caret framed />
          </GroupBody>
          <GroupFooter $centred $end={54}><span>特征</span><Caret /></GroupFooter>
        </Group>
        <Group $width={172}>
          <GroupBody $start={6}>
            <Big icon="moveFace" label="移动面" width={44} />
            <Commands before={4} width={76} items={[["offset", "偏置区域"], ["replace", "替换面"], ["remove", "删除面"]]} />
            <Big icon="sync" label="更多" width={36} caret framed />
          </GroupBody>
          <GroupFooter $centred><span>同步建模</span><Caret /></GroupFooter>
        </Group>
        <Group $width={43}>
          <GroupBody><Big icon="surface" label="曲面" width={42} caret /></GroupBody>
        </Group>
        {toolGroups.map((g) => (
          <Group key={g.label} $width={g.width}>
            <IconRows>
              {g.rows.map((row, r) => (
                <IconRow key={r}>
                  {row.map((name, i) =>
                    name === "|" ? <RowDivider key={i} $height={18} /> : <IconButton key={i} aria-label={name}><Icon name={name} /></IconButton>
                  )}
                </IconRow>
              ))}
            </IconRows>
            <GroupFooter $start={g.start} $edge={g.edge}><span>{g.label}</span><Caret /></GroupFooter>
          </Group>
        ))}
      </Ribbon>

      <SelectionBar>
        <BoxEnd />
        <SelectBox $width={140} $height={20}>
          <SmallSelect aria-label="选择范围"><option>仅在工作部件内</option></SmallSelect>
          <Caret />
        </SelectBox>
        <BarTools $gap={7} $before={9}>
          {["ghostBox", "ghostFunnel", "funnel"].map((n) => <IconButton key={n} aria-label={n}><Icon name={n} /></IconButton>)}
          <Caret />
        </BarTools>
        <BarTools $gap={9} $before={8}>
          {["snap", "ghostTree", "marquee"].map((n) => <IconButton key={n} aria-label={n}><Icon name={n} /></IconButton>)}
        </BarTools>
        <BarTools $gap={8} $before={7}>
          <Caret />
          {["solidGrey", "solidBlue"].map((n) => <IconButton key={n} aria-label={n}><Icon name={n} /></IconButton>)}
        </BarTools>
        <BarTools $gap={11} $before={8}>
          <SelectBox $width={140} $height={20}>
            <SmallSelect aria-label="曲线规则"><option>相切曲线</option></SmallSelect>
            <Caret />
          </SelectBox>
        </BarTools>
        <BarTools $gap={9} $before={11}>
          {["route", "arrow", "points", "endPoint", "midPoint", "control", "polePoint", "intersect", "centre", "quadrant", "cross", "onCurve", "onFace", "gridFace"].map((n) => (
            <IconButton key={n} aria-label={n}><Icon name={n} /></IconButton>
          ))}
          <Divider $height={24} />
        </BarTools>
      </SelectionBar>

      <Main>
        <Navigator>
          <NavigatorBar><IconButton aria-label="最大化"><Icon name="maximize" /></IconButton></NavigatorBar>
          <HistoryTable>
            <thead><tr><th /><th>最新</th></tr></thead>
            <tbody>
              {Array.from({ length: 40 }, (_, i) => (
                <tr key={i}><td /><td>{(i === 5 || i === 6) && <Icon name="check" />}</td></tr>
              ))}
            </tbody>
          </HistoryTable>
        </Navigator>

        <Viewport>
          <Model />
          <Dialog onSubmit={(e) => e.preventDefault()}>
            <DialogHeader>
              <Icon name="gear" />
              <DialogTitle>边倒圆</DialogTitle>
              <IconButton type="button" aria-label="重置"><Icon name="reset" /></IconButton>
              <IconButton type="button" aria-label="关闭"><Icon name="close" /></IconButton>
            </DialogHeader>
            <Panel>
              <PanelTitle>要倒圆的边<Icon name="chevron" /></PanelTitle>
              <Field $height={26}>
                <label htmlFor="continuity">混合面连续性</label>
                <Combo $width={141} $height={26}>
                  <Icon name="tangent" />
                  <Select id="continuity"><option>G1（相切）</option></Select>
                  <Caret />
                </Combo>
              </Field>
              <Field $height={32}>
                <ActiveLabel><Icon name="check" />选择边 (2)</ActiveLabel>
                <EdgeButton type="button" $size={32} aria-label="边"><Icon name="edgeCube" size={26} /></EdgeButton>
              </Field>
              <Field $height={26}>
                <label htmlFor="shape">形状</label>
                <Combo $width={141} $height={26}>
                  <Icon name="circular" />
                  <Select id="shape"><option>圆形</option></Select>
                  <Caret />
                </Combo>
              </Field>
              <Field $height={25}>
                <label htmlFor="radius">半径 1</label>
                <RadiusBox $width={141} $height={25}>
                  <RadiusInput id="radius" ref={radius} defaultValue="5" />
                  <Select aria-label="单位"><option>mm</option></Select>
                  <Caret />
                </RadiusBox>
              </Field>
              <Field $height={24}>
                <label htmlFor="add-set">添加新集</label>
                <AddButton type="button" id="add-set" $size={24}><Icon name="addSet" /></AddButton>
              </Field>
            </Panel>
            <Actions>
              <ActionButton>{"< 确定 >"}</ActionButton>
              <ActionButton type="button">应用</ActionButton>
              <ActionButton type="button">取消</ActionButton>
            </Actions>
          </Dialog>
          <FloatingField>
            <Grip />
            <label htmlFor="live-radius">半径 1</label>
            <SizeBox $height={23}>
              <SizeInput id="live-radius" defaultValue="5" />
              <Caret />
            </SizeBox>
          </FloatingField>
        </Viewport>
      </Main>

      <Marker $left={152} $top={31} $width={65} $height={135} />
      <Marker $left={212} $top={278} $width={82} $height={86} />
    </Page>
  );
}
